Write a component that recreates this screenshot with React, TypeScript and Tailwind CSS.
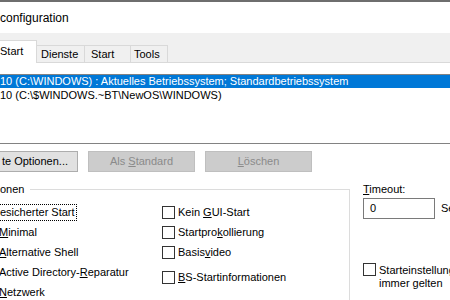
export default function App() {
  const box = "w-[13px] h-[13px] border border-[#333333] bg-white shrink-0";
  return (
    <div className="w-[450px] h-[300px] overflow-hidden bg-white flex flex-col font-['Liberation_Sans',Arial,sans-serif] text-[11px] text-black leading-none">
      <div className="h-[2px] bg-[#6e6e6e] shrink-0" />
      <div className="h-[31px] shrink-0 flex items-center text-[12px]">configuration</div>
      <div className="h-[30px] shrink-0 bg-[#f0f0f0] flex items-end">
        <div className="w-[37px] h-[23px] bg-white border-t border-r border-[#d9d9d9] flex items-center pb-[2px]">Start</div>
        <div className="w-[48px] h-[18px] border-t border-r border-b border-[#d9d9d9] flex items-center pl-[4px]">Dienste</div>
        <div className="w-[46px] h-[18px] border-t border-r border-b border-[#d9d9d9] flex items-center pl-[6px]">Start</div>
        <div className="w-[37px] h-[18px] border-t border-r border-b border-[#d9d9d9] flex items-center pl-[3px]">Tools</div>
        <div className="flex-1 h-px bg-[#d9d9d9]" />
      </div>
      <div className="mt-[11px] h-[70px] shrink-0 border-t border-b border-[#828282] flex flex-col">
        <div className="h-[13px] bg-[#0078d7] text-white flex items-center whitespace-nowrap">
          {"10 (C:\\WINDOWS) : Aktuelles Betriebssystem; Standardbetriebssystem"}
        </div>
        <div className="h-[14px] flex items-center whitespace-nowrap">
          {"10 (C:\\$WINDOWS.~BT\\NewOS\\WINDOWS)"}
        </div>
      </div>
      <div className="mt-[7px] flex gap-[10px] shrink-0">
        <div className="w-[78px] h-[21px] bg-[#e1e1e1] border-t border-r border-b border-[#adadad] flex items-center justify-end pr-[9px]">te Optionen...</div>
        <div className="w-[107px] h-[21px] bg-[#cccccc] border border-[#bfbfbf] text-[#8a8a8a] flex items-center justify-center">
          Als&nbsp;<u>S</u>tandard
        </div>
        <div className="w-[107px] h-[21px] bg-[#cccccc] border border-[#bfbfbf] text-[#8a8a8a] flex items-center justify-center">
          <u>L</u>öschen
        </div>
      </div>
      <div className="mt-[12px] flex flex-1">
        <div className="w-[350px] flex flex-col shrink-0">
          <div className="h-[11px] flex">
            <span className="pr-[6px] leading-[11px]">onen</span>
            <div className="flex-1 mt-[5px] border-t border-r border-[#dcdcdc]" />
          </div>
          <div className="flex-1 border-r border-[#dcdcdc] flex pt-[7px]">
            <div className="w-[162px] flex flex-col ml-[-1px]">
              <div className="h-[20px] flex items-center">
                <span className="h-[17px] border border-dotted border-black flex items-center pr-[1px]">esicherter Start</span>
              </div>
              <div className="h-[20px] flex items-center"><span><u>M</u>inimal</span></div>
              <div className="h-[20px] flex items-center"><span><u>A</u>lternative Shell</span></div>
              <div className="h-[20px] flex items-center"><span>Active Directory-<u>R</u>eparatur</span></div>
              <div className="h-[20px] flex items-center"><span><u>N</u>etzwerk</span></div>
            </div>
            <div className="flex flex-col ml-[1px]">
              <div className="h-[20px] flex items-center gap-[3px]"><div className={box} /><span>Kein <u>G</u>UI-Start</span></div>
              <div className="h-[20px] flex items-center gap-[3px]"><div className={box} /><span>Startpro<u>k</u>ollierung</span></div>
              <div className="h-[20px] flex items-center gap-[3px]"><div className={box} /><span>Basis<u>v</u>ideo</span></div>
              <div className="mt-[5px] h-[20px] flex items-center gap-[3px]"><div className={box} /><span><u>B</u>S-Startinformationen</span></div>
            </div>
          </div>
        </div>
        <div className="flex flex-col pl-[13px]">
          <div className="h-[11px] leading-[11px] whitespace-nowrap"><u>T</u>imeout:</div>
          <div className="mt-[3px] flex items-center">
            <div className="w-[72px] h-[21px] border border-[#7a7a7a] flex items-center pl-[6px]">0</div>
            <span className="ml-[6px]">Se</span>
          </div>
          <div className="mt-[44px] flex gap-[3px]">
            <div className={box} />
            <div className="flex flex-col leading-[13px] whitespace-nowrap pt-[1px]">
              <span>Starteinstellungen</span>
              <span>immer gelten</span>
            </div>
          </div>
        </div>
      </div>
    </div>
  );
}
